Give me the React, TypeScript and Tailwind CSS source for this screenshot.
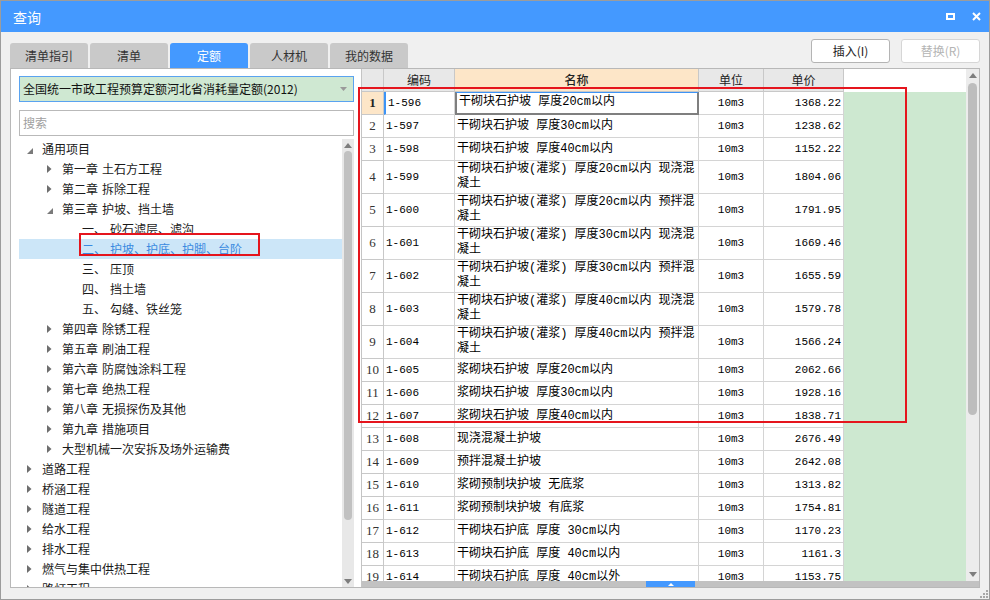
import React from "react";

type TreeNode = { label: string; level: number; state: "open" | "closed" | "leaf"; selected?: boolean };

const tree: TreeNode[] = [
  { label: "通用项目", level: 0, state: "open" },
  { label: "第一章 土石方工程", level: 1, state: "closed" },
  { label: "第二章 拆除工程", level: 1, state: "closed" },
  { label: "第三章 护坡、挡土墙", level: 1, state: "open" },
  { label: "一、 砂石滤层、滤沟", level: 2, state: "leaf" },
  { label: "二、 护坡、护底、护脚、台阶", level: 2, state: "leaf", selected: true },
  { label: "三、 压顶", level: 2, state: "leaf" },
  { label: "四、 挡土墙", level: 2, state: "leaf" },
  { label: "五、 勾缝、铁丝笼", level: 2, state: "leaf" },
  { label: "第四章 除锈工程", level: 1, state: "closed" },
  { label: "第五章 刷油工程", level: 1, state: "closed" },
  { label: "第六章 防腐蚀涂料工程", level: 1, state: "closed" },
  { label: "第七章 绝热工程", level: 1, state: "closed" },
  { label: "第八章 无损探伤及其他", level: 1, state: "closed" },
  { label: "第九章 措施项目", level: 1, state: "closed" },
  { label: "大型机械一次安拆及场外运输费", level: 1, state: "closed" },
  { label: "道路工程", level: 0, state: "closed" },
  { label: "桥涵工程", level: 0, state: "closed" },
  { label: "隧道工程", level: 0, state: "closed" },
  { label: "给水工程", level: 0, state: "closed" },
  { label: "排水工程", level: 0, state: "closed" },
  { label: "燃气与集中供热工程", level: 0, state: "closed" },
  { label: "路灯工程", level: 0, state: "closed" },
];

const indent = ["pl-[8px]", "pl-[28px]", "pl-[48px]"];

interface Quota {
  code: string;
  name: string[];
  price: string;
}

const quotas: Quota[] = [
  { code: "1-596", name: ["干砌块石护坡 厚度20cm以内"], price: "1368.22" },
  { code: "1-597", name: ["干砌块石护坡 厚度30cm以内"], price: "1238.62" },
  { code: "1-598", name: ["干砌块石护坡 厚度40cm以内"], price: "1152.22" },
  { code: "1-599", name: ["干砌块石护坡(灌浆) 厚度20cm以内 现浇混", "凝土"], price: "1804.06" },
  { code: "1-600", name: ["干砌块石护坡(灌浆) 厚度20cm以内 预拌混", "凝土"], price: "1791.95" },
  { code: "1-601", name: ["干砌块石护坡(灌浆) 厚度30cm以内 现浇混", "凝土"], price: "1669.46" },
  { code: "1-602", name: ["干砌块石护坡(灌浆) 厚度30cm以内 预拌混", "凝土"], price: "1655.59" },
  { code: "1-603", name: ["干砌块石护坡(灌浆) 厚度40cm以内 现浇混", "凝土"], price: "1579.78" },
  { code: "1-604", name: ["干砌块石护坡(灌浆) 厚度40cm以内 预拌混", "凝土"], price: "1566.24" },
  { code: "1-605", name: ["浆砌块石护坡 厚度20cm以内"], price: "2062.66" },
  { code: "1-606", name: ["浆砌块石护坡 厚度30cm以内"], price: "1928.16" },
  { code: "1-607", name: ["浆砌块石护坡 厚度40cm以内"], price: "1838.71" },
  { code: "1-608", name: ["现浇混凝土护坡"], price: "2676.49" },
  { code: "1-609", name: ["预拌混凝土护坡"], price: "2642.08" },
  { code: "1-610", name: ["浆砌预制块护坡 无底浆"], price: "1313.82" },
  { code: "1-611", name: ["浆砌预制块护坡 有底浆"], price: "1754.81" },
  { code: "1-612", name: ["干砌块石护底 厚度 30cm以内"], price: "1170.23" },
  { code: "1-613", name: ["干砌块石护底 厚度 40cm以内"], price: "1161.3" },
  { code: "1-614", name: ["干砌块石护底 厚度 40cm以外"], price: "1153.75" },
];

const tabs = ["清单指引", "清单", "定额", "人材机", "我的数据"];

function UpArrow() {
  return (
    <svg width="8" height="5" viewBox="0 0 8 5">
      <polygon points="4,0 8,5 0,5" fill="#7d7d7d" />
    </svg>
  );
}

function DownArrow() {
  return (
    <svg width="8" height="5" viewBox="0 0 8 5">
      <polygon points="0,0 8,0 4,5" fill="#7d7d7d" />
    </svg>
  );
}

function Toggle({ state }: { state: TreeNode["state"] }) {
  if (state === "open")
    return (
      <svg width="6" height="6" viewBox="0 0 6 6" className="mt-[3px]">
        <polygon points="6,0 6,6 0,6" fill="#7a7a7a" />
      </svg>
    );
  if (state === "closed")
    return (
      <svg width="5" height="8" viewBox="0 0 5 8">
        <polygon points="0,0 4.5,4 0,8" fill="#6e6e6e" />
      </svg>
    );
  return null;
}

function TreeRow({ node }: { node: TreeNode }) {
  const parts = node.label.split(" ");
  return (
    <div
      className={`flex h-[20px] items-center ${indent[node.level]} ${
        node.selected ? "bg-[#cce6f8] text-[#3a8ae0]" : "text-[#1a1a1a]"
      }`}
    >
      <div className="flex w-[15px] shrink-0 items-center">
        <Toggle state={node.state} />
      </div>
      <span className="whitespace-nowrap leading-[20px]">
        {parts.map((p, i) => (
          <span key={i} className={i > 0 ? "ml-[4px]" : ""}>
            {p}
          </span>
        ))}
      </span>
    </div>
  );
}

export default function App() {
  const ui = "font-['Noto_Sans_CJK_SC',sans-serif]";
  const mono = "font-['Liberation_Mono','Noto_Sans_CJK_SC',monospace]";

  return (
    <div className={`flex h-[600px] w-[990px] flex-col border border-[#9c9c9c] bg-[#f0f0f0] ${ui}`}>
      {/* title bar */}
      <div className="flex h-[31px] shrink-0 items-center bg-[#4499ff] pl-[12px] pr-[8px]">
        <span className="text-[14px] leading-[20px] text-white">查询</span>
        <div className="flex-1" />
        <svg width="9" height="7" viewBox="0 0 9 7" className="mr-[17px]">
          <path d="M0 0H9V7H0Z M2 2V5H7V2Z" fill="white" fillRule="evenodd" />
        </svg>
        <svg width="9" height="9" viewBox="0 0 9 9">
          <path d="M1 1L8 8M8 1L1 8" stroke="white" strokeWidth="2" />
        </svg>
      </div>

      <div className="relative flex flex-1 flex-col px-[9px] pb-[11px] pt-[7px]">
        {/* tabs + buttons */}
        <div className="flex h-[29px] items-end">
          <div className="flex gap-[2px]">
            {tabs.map(t => (
              <div
                key={t}
                className={`h-[25px] w-[78px] rounded-t-[3px] text-center text-[12px] leading-[25px] ${
                  t === "定额" ? "bg-[#4499ff] text-white" : "bg-[#c9c9c9] text-[#333]"
                }`}
              >
                {t}
              </div>
            ))}
          </div>
          <div className="flex-1" />
          <div className="mb-[5px] flex gap-[11px]">
            <button className="h-[24px] w-[79px] rounded-[3px] border border-[#b4b4b4] bg-white text-[12px] text-[#222]">
              插入(I)
            </button>
            <button className="h-[24px] w-[79px] rounded-[3px] border border-[#d6d6d6] bg-white text-[12px] text-[#b4b4b4]">
              替换(R)
            </button>
          </div>
        </div>

        {/* panel */}
        <div className="relative flex h-[520px] border border-[#b8b8b8] bg-white">
          {/* left: tree */}
          <div className="flex w-[350px] shrink-0 flex-col pl-[8px] pr-[7px] pt-[7px]">
            <div className="flex h-[26px] items-center border border-[#5aa3f0] bg-[#cfe8d2] pl-[3px] pr-[6px]">
              <span className="flex-1 whitespace-nowrap text-[12px] leading-[20px] text-[#111]">
                全国统一市政工程预算定额河北省消耗量定额(2012)
              </span>
              <svg width="7" height="4" viewBox="0 0 7 4">
                <polygon points="0,0 7,0 3.5,4" fill="#9a9a9a" />
              </svg>
            </div>
            <div className="mt-[8px] flex h-[26px] items-center border border-[#b9b9b9] bg-white pl-[3px]">
              <span className="text-[12px] leading-[20px] text-[#a0a0a0]">搜索</span>
            </div>
            <div className="mt-[3px] flex min-h-0 flex-1 text-[12px]">
              <div className="relative min-w-0 flex-1 overflow-hidden">
                {tree.map(n => (
                  <TreeRow key={n.label} node={n} />
                ))}
                <div className="absolute left-[60px] top-[94px] h-[23px] w-[181px] border-2 border-[#e5151d]" />
              </div>
              <div className="flex w-[12px] shrink-0 flex-col items-center bg-[#e8e8e8]">
                <div className="flex h-[12px] items-center justify-center">
                  <UpArrow />
                </div>
                <div className="h-[369px] w-[8px] rounded-full bg-[#c1c1c1]" />
                <div className="flex-1" />
                <div className="flex h-[12px] items-center justify-center">
                  <DownArrow />
                </div>
              </div>
            </div>
          </div>

          {/* right: table */}
          <div className="flex min-w-0 flex-1 flex-col border-l border-[#c4c4c4]">
            <div className="flex min-h-0 flex-1">
              <div className="flex min-w-0 flex-1 flex-col">
                <div className="flex h-[23px] shrink-0 text-[12px] leading-[22px] text-[#222]">
                  <div className="w-[22px] border-b border-r border-[#c8c8c8] bg-[#e8e8e8]" />
                  <div className="w-[71px] border-b border-r border-[#c8c8c8] bg-[#e8e8e8] text-center">编码</div>
                  <div className="w-[244px] border-b border-r border-[#c8c8c8] bg-[#fde6c8] text-center font-medium">
                    名称
                  </div>
                  <div className="w-[65px] border-b border-r border-[#c8c8c8] bg-[#e8e8e8] text-center">单位</div>
                  <div className="w-[80px] border-b border-r border-[#c8c8c8] bg-[#e8e8e8] text-center">单价</div>
                  <div className="flex-1 bg-white" />
                </div>
                <div className="min-h-0 flex-1 overflow-hidden bg-[#cde8d0]">
                  {quotas.map((q, i) => {
                    const tall = q.name.length > 1;
                    const first = i === 0;
                    return (
                      <div key={q.code} className={`flex ${tall ? "h-[33px]" : "h-[23px]"} text-black`}>
                        <div
                          className={`flex w-[22px] items-center justify-center border-b border-r border-[#c8c8c8] font-['Liberation_Serif',serif] text-[13px] ${
                            first ? "bg-[#fde6c8] font-bold text-[#222]" : "bg-white text-[#333]"
                          }`}
                        >
                          {i + 1}
                        </div>
                        <div
                          className={`flex w-[71px] items-center border-b border-r border-[#d4d4d4] bg-white pl-[2px] text-[11px] ${mono} ${
                            first ? "border-l-2 border-l-[#3d94f6]" : ""
                          }`}
                        >
                          {q.code}
                        </div>
                        <div
                          className={`w-[244px] overflow-hidden bg-white pl-[2px] text-[12px] ${mono} ${
                            first
                              ? "border-b-2 border-l-2 border-r-2 border-t border-[#7f7f7f] border-t-[#3d94f6] leading-[19px]"
                              : "border-b border-r border-[#d4d4d4]"
                          } ${tall ? "pt-[1px] leading-[15px]" : first ? "" : "leading-[22px]"}`}
                        >
                          {q.name.map(l => (
                            <div key={l} className="whitespace-nowrap">
                              {l}
                            </div>
                          ))}
                        </div>
                        <div
                          className={`flex w-[65px] items-center justify-center border-b border-r border-[#d4d4d4] bg-white text-[11px] ${mono}`}
                        >
                          10m3
                        </div>
                        <div
                          className={`flex w-[80px] items-center justify-end border-b border-r border-[#d4d4d4] bg-white pr-[2px] text-[11px] ${mono}`}
                        >
                          {q.price}
                        </div>
                        <div className="flex-1" />
                      </div>
                    );
                  })}
                </div>
              </div>
              <div className="flex w-[13px] shrink-0 flex-col items-center bg-[#ececec]">
                <div className="flex h-[13px] items-center justify-center">
                  <UpArrow />
                </div>
                <div className="mt-[1px] h-[332px] w-[9px] rounded-full bg-[#bdbdbd]" />
                <div className="flex-1" />
                <div className="flex h-[13px] items-center justify-center">
                  <DownArrow />
                </div>
              </div>
            </div>
            <div className="flex h-[6px] shrink-0 bg-[#c2c2c2]">
              <div className="w-[284px]" />
              <div className="flex w-[49px] items-center justify-center bg-[#4499ff]">
                <svg width="6" height="3" viewBox="0 0 6 3">
                  <polygon points="3,0 6,3 0,3" fill="white" />
                </svg>
              </div>
            </div>
          </div>

          {/* annotation over table */}
          <div className="pointer-events-none absolute left-[347px] top-[18px] h-[336px] w-[549px] border-2 border-[#e5151d]" />
        </div>

        {/* resize grip */}
        <svg width="9" height="9" viewBox="0 0 9 9" className="absolute bottom-[1px] right-[1px]">
          <rect x="7" y="1" width="2" height="2" fill="#a8a8a8" />
          <rect x="4" y="4" width="2" height="2" fill="#a8a8a8" />
          <rect x="7" y="4" width="2" height="2" fill="#a8a8a8" />
          <rect x="1" y="7" width="2" height="2" fill="#a8a8a8" />
          <rect x="4" y="7" width="2" height="2" fill="#a8a8a8" />
          <rect x="7" y="7" width="2" height="2" fill="#a8a8a8" />
        </svg>
      </div>
    </div>
  );
}
